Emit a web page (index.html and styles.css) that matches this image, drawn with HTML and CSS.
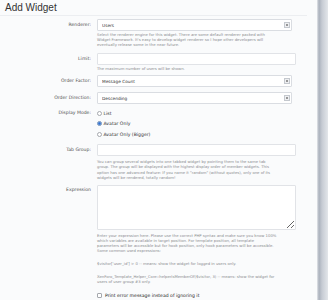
FILE: index.html
```html
<!DOCTYPE html>
<html lang="en">
<head>
  <meta charset="UTF-8" />
  <meta name="viewport" content="width=device-width, initial-scale=1.0"/>
  <title>Add Widget</title>
  <link rel="stylesheet" href="styles.css">
</head>
<body>

  <div class="page">
    <div class="main">
      <h1 class="title">Add Widget</h1>

      <form class="widget-form">
        <div class="row">
          <label class="row-label">Renderer:</label>
          <div class="row-field">
            <div class="select-wrap">
              <select><option>Users</option></select>
            </div>
            <p class="hint">Select the renderer engine for this widget. There are some default renderer packed with<br>Widget Framework. It's easy to develop widget renderer so I hope other developers will<br>eventually release some in the near future.</p>
          </div>
        </div>

        <div class="row row-limit">
          <label class="row-label">Limit:</label>
          <div class="row-field">
            <input type="text" class="text-input">
            <p class="hint">The maximum number of users will be shown.</p>
          </div>
        </div>

        <div class="row row-factor">
          <label class="row-label">Order Factor:</label>
          <div class="row-field">
            <div class="select-wrap">
              <select><option>Message Count</option></select>
            </div>
          </div>
        </div>

        <div class="row row-direction">
          <label class="row-label">Order Direction:</label>
          <div class="row-field">
            <div class="select-wrap">
              <select><option>Descending</option></select>
            </div>
          </div>
        </div>

        <div class="row row-mode">
          <label class="row-label mode-label">Display Mode:</label>
          <div class="row-field">
            <label class="choice"><input type="radio" name="mode"> List</label>
            <label class="choice"><input type="radio" name="mode" checked> Avatar Only</label>
            <label class="choice"><input type="radio" name="mode"> Avatar Only (Bigger)</label>
          </div>
        </div>

        <div class="row row-tab">
          <label class="row-label">Tab Group:</label>
          <div class="row-field">
            <input type="text" class="text-input">
            <p class="hint hint-tab">You can group several widgets into one tabbed widget by pointing them to the same tab<br>group. The group will be displayed with the highest display order of member widgets. This<br>option has one advanced feature: If you name it "random" (without quotes), only one of its<br>widgets will be rendered, totally random!</p>
          </div>
        </div>

        <div class="row row-expression">
          <label class="row-label expression-label">Expression</label>
          <div class="row-field">
            <textarea class="expression"></textarea>
            <div class="expr-notes">
              <p class="hint">Enter your expression here. Please use the correct PHP syntax and make sure you know 100%<br>which variables are available in target position. For template position, all template<br>parameters will be accessible but for hook position, only hook parameters will be accessible.<br>Some common used expressions:</p>
              <p class="hint">$visitor['user_id'] &gt; 0 -- means: show the widget for logged in users only.</p>
              <p class="hint">XenForo_Template_Helper_Core::helperIsMemberOf($visitor, 3) -- means: show the widget for<br>users of user group #3 only.</p>
            </div>
            <label class="check"><input type="checkbox"> Print error message instead of ignoring it</label>
          </div>
        </div>
      </form>
    </div>
    <div class="edge"></div>
  </div>

</body>
</html>
```

FILE: styles.css
```css
body {
  margin: 0;
  background: #fafbfc;
  font-family: "DejaVu Sans", Verdana, sans-serif;
  color: #333;
}

.page {
  display: flex;
  width: 328px;
  height: 300px;
  overflow: hidden;
}

.main {
  flex: 1;
  min-width: 0;
  overflow: hidden;
}

.edge {
  width: 11px;
  flex: none;
  background: linear-gradient(to right, #e4e6ea 0, #aab1bc 2px, #c6cbd3 5px, #e3e6ea 11px);
}

.title {
  margin: 0;
  width: 302px;
  height: 13px;
  padding: 2px 0 0 5px;
  font-family: "Liberation Sans", Arial, sans-serif;
  font-size: 10px;
  font-weight: normal;
  line-height: 11px;
  color: #333;
  border-bottom: 1px solid #eceef1;
}

.widget-form {
  margin: 0;
}

.row {
  display: grid;
  grid-template-columns: 91px 199px;
  column-gap: 6px;
  align-items: start;
  margin-top: 3px;
}

.row-field {
  min-width: 0;
}

.row-label {
  text-align: right;
  font-size: 4.6px;
  line-height: 12px;
  color: #505050;
}

.row-limit { margin-top: 6px; }
.row-factor { margin-top: 4px; }
.row-direction { margin-top: 5px; }
.row-mode { margin-top: 4px; }
.row-tab { margin-top: 4px; }
.row-expression { margin-top: 4px; }

.mode-label {
  line-height: 10.5px;
}

.expression-label {
  line-height: 10px;
}

.select-wrap {
  position: relative;
  width: 195px;
}

.select-wrap select {
  appearance: none;
  display: block;
  width: 195px;
  height: 12px;
  margin: 0;
  padding: 0 0 0 4px;
  font-family: inherit;
  font-size: 4.3px;
  color: #333;
  background: #fff;
  border: 1px solid #dadde2;
  border-radius: 1px;
}

.select-wrap::after {
  content: "";
  position: absolute;
  right: 2px;
  top: 3px;
  width: 4px;
  height: 4px;
  border: 1px solid #c4c8ce;
  background: radial-gradient(circle, #777 0, #777 0.6px, #eeeff1 1px);
}

.text-input {
  display: block;
  box-sizing: border-box;
  width: 199px;
  height: 12px;
  margin: 0;
  background: #fff;
  border: 1px solid #e1e3e7;
  border-radius: 1px;
}

.expression {
  display: block;
  box-sizing: border-box;
  width: 199px;
  height: 45px;
  margin: 0;
  resize: vertical;
  background: #fff;
  border: 1px solid #e1e3e7;
  border-radius: 1px;
}

.hint {
  margin: 1px 0 0;
  font-size: 3.8px;
  line-height: 5px;
  color: #8a8c90;
  white-space: nowrap;
}

.hint-tab {
  margin-top: 3px;
  line-height: 5.5px;
}

.expr-notes {
  display: flex;
  flex-direction: column;
  gap: 8px;
  padding-top: 3px;
}

.expr-notes .hint {
  margin: 0;
  flex: none;
}

.check {
  display: flex;
  align-items: center;
  height: 7px;
  margin-top: 8px;
  font-size: 4.6px;
  color: #222;
}

.check input {
  appearance: none;
  width: 5px;
  height: 5px;
  margin: 0 3px 0 0;
  border: 1px solid #a5a8ad;
  border-radius: 1px;
  background: #fff;
}

.choice {
  display: flex;
  align-items: center;
  height: 10.5px;
  font-size: 4.6px;
  color: #333;
}

.choice input {
  appearance: none;
  width: 5px;
  height: 5px;
  margin: 0 1.5px 0 0;
  border: 1px solid #a5a8ad;
  border-radius: 50%;
  background: #fff;
}

.choice input:checked {
  border-color: #6e8fb8;
  background: radial-gradient(circle, #2f6fcf 0, #4d86dc 1.2px, #dfe9f7 2px);
}
```
